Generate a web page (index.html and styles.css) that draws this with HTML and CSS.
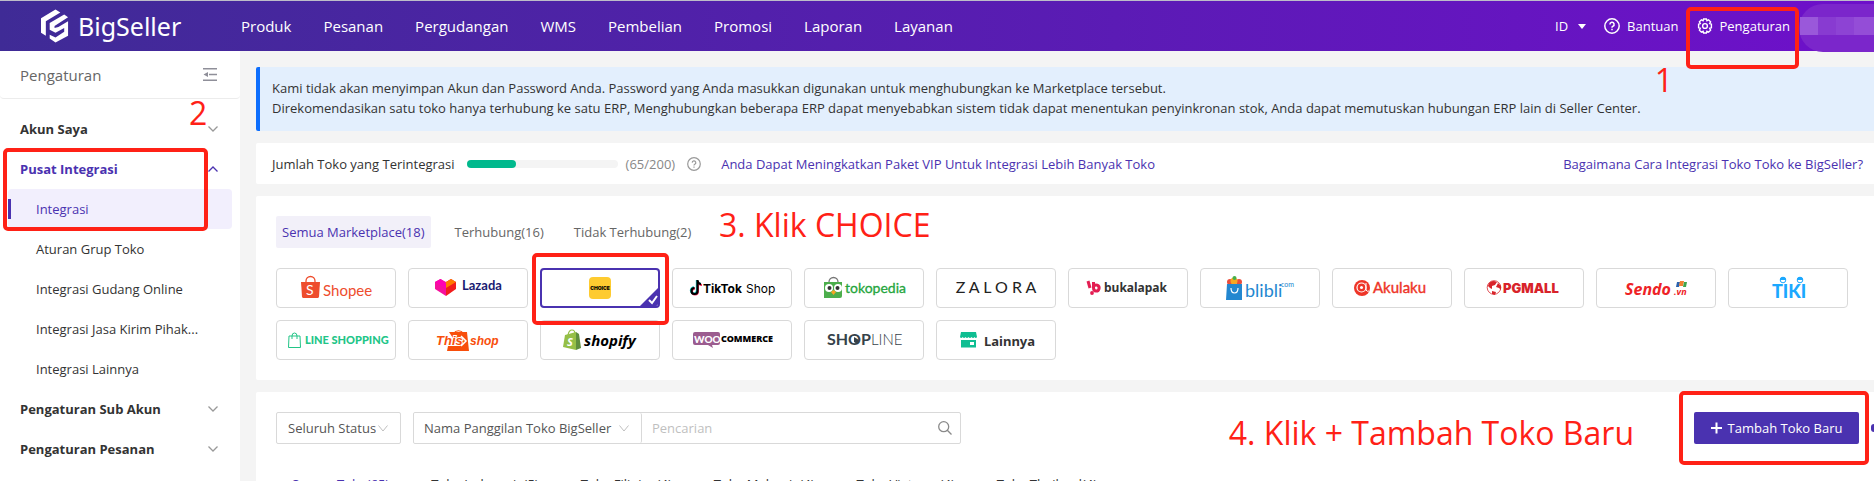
FILE: index.html
```html
<!DOCTYPE html>
<html lang="id">
<head>
    <meta charset="UTF-8">
    <meta name="viewport" content="width=device-width, initial-scale=1.0">
    <title>BigSeller - Integrasi</title>
    <link rel="stylesheet" href="styles.css">
</head>
<body>
    <header class="header">
        <a class="brand" href="#" aria-label="BigSeller">
            <svg class="brand-icon" viewBox="0 0 30 34" fill="#fff">
                <path d="M0 9 15 0l5 3L5 12v15L0 24z"/>
                <path d="M9 14 24 5l4 3-14 9v2l4-1 10-6v15L15 34 9 30v-4l6 3 9-6v-4l-9 5-6-3z"/>
            </svg>
            <span class="brand-name">BigSeller</span>
        </a>
        <nav class="nav">
            <a href="#">Produk</a>
            <a href="#">Pesanan</a>
            <a href="#">Pergudangan</a>
            <a href="#">WMS</a>
            <a href="#">Pembelian</a>
            <a href="#">Promosi</a>
            <a href="#">Laporan</a>
            <a href="#">Layanan</a>
        </nav>
        <div class="header-tools">
            <button class="tool" type="button">ID <span class="caret"></span></button>
            <a class="tool" href="#">
                <svg width="16" height="16" viewBox="0 0 16 16" fill="none" stroke="#fff" stroke-width="1.5"><circle cx="8" cy="8" r="7.2"/><path d="M5.9 6.4a2.1 2.1 0 1 1 3 1.9c-.7.3-.9.6-.9 1.4M8 10.8v1.4"/></svg>
                Bantuan
            </a>
            <a class="tool" href="#">
                <svg width="16" height="16" viewBox="0 0 16 16" fill="none" stroke="#fff" stroke-width="1.4"><path d="M6.6 1h2.8l.5 1.7 1.7-.9 2 2-.9 1.7 1.7.5v3.8l-1.7.5.9 1.9-2 2-1.7-.9-.5 1.7H6.6l-.5-1.7-1.7.9-2-2 .9-1.9-1.7-.5V6l1.7-.5-.9-1.7 2-2 1.7.9z"/><circle cx="8" cy="8" r="2.4"/></svg>
                Pengaturan
            </a>
        </div>
        <div class="account">
            <div class="account-name"><i></i><i></i><i></i><i></i></div>
        </div>
    </header>

    <div class="page">
        <aside class="sidebar">
            <div class="sidebar-head">
                <span>Pengaturan</span>
                <button class="collapse" type="button" aria-label="Tutup menu">
                    <svg width="14" height="13" viewBox="0 0 14 13" fill="#8f8f99"><path d="M0 0h14v1.6H0zM6 5.7h8v1.6H6zM0 11.4h14V13H0zM.5 6.5 5 4v5z"/></svg>
                </button>
            </div>
            <ul class="menu">
                <li><a class="group" href="#">Akun Saya <svg class="arrow" viewBox="0 0 10 6"><path d="M.5.5 5 5 9.5.5"/></svg></a></li>
                <li>
                    <a class="group open" href="#">Pusat Integrasi <svg class="arrow" viewBox="0 0 10 6"><path d="M.5 5.5 5 1l4.5 4.5"/></svg></a>
                    <ul class="submenu">
                        <li><a class="active" href="#">Integrasi</a></li>
                        <li><a href="#">Aturan Grup Toko</a></li>
                        <li><a href="#">Integrasi Gudang Online</a></li>
                        <li><a href="#">Integrasi Jasa Kirim Pihak...</a></li>
                        <li><a href="#">Integrasi Lainnya</a></li>
                    </ul>
                </li>
                <li><a class="group" href="#">Pengaturan Sub Akun <svg class="arrow" viewBox="0 0 10 6"><path d="M.5.5 5 5 9.5.5"/></svg></a></li>
                <li><a class="group" href="#">Pengaturan Pesanan <svg class="arrow" viewBox="0 0 10 6"><path d="M.5.5 5 5 9.5.5"/></svg></a></li>
            </ul>
        </aside>

        <main class="content">
            <div class="notice">
                <p>Kami tidak akan menyimpan Akun dan Password Anda. Password yang Anda masukkan digunakan untuk menghubungkan ke Marketplace tersebut.</p>
                <p>Direkomendasikan satu toko hanya terhubung ke satu ERP, Menghubungkan beberapa ERP dapat menyebabkan sistem tidak dapat menentukan penyinkronan stok, Anda dapat memutuskan hubungan ERP lain di Seller Center.</p>
            </div>

            <section class="panel quota">
                <span>Jumlah Toko yang Terintegrasi</span>
                <div class="progress"><div class="progress-bar" style="width: 32.5%"></div></div>
                <span class="count">(65/200)</span>
                <svg class="help" width="14" height="14" viewBox="0 0 14 14" fill="none" stroke="#999" stroke-width="1.2"><circle cx="7" cy="7" r="6.3"/><path d="M5.2 5.6a1.8 1.8 0 1 1 2.6 1.7c-.6.3-.8.5-.8 1.2M7 9.5v1.2"/></svg>
                <a class="upgrade" href="#">Anda Dapat Meningkatkan Paket VIP Untuk Integrasi Lebih Banyak Toko</a>
                <a class="howto" href="#">Bagaimana Cara Integrasi Toko Toko ke BigSeller?</a>
            </section>

            <section class="panel marketplaces">
                <div class="tabs">
                    <button class="tab active" type="button">Semua Marketplace(18)</button>
                    <button class="tab" type="button">Terhubung(16)</button>
                    <button class="tab" type="button">Tidak Terhubung(2)</button>
                </div>
                <div class="cards">
                    <button class="card" type="button" aria-label="Shopee">
                        <svg viewBox="0 0 120 40"><path d="M30 14v-1a4.500 4.500 0 0 1 9 0v1" fill="none" stroke="#ee4d2d" stroke-width="1.300"/><path d="M25 14h19l-1 14.500q-.2 1.500-1.500 1.500h-14q-1.300 0-1.500-1.500z" fill="#ee4d2d"/><text x="30" y="27" class="lato" font-size="14" fill="#fff">S</text><text x="47" y="28" class="lato" font-size="15" fill="#ee4d2d">Shopee</text></svg>
                    </button>
                    <button class="card" type="button" aria-label="Lazada">
                        <svg viewBox="0 0 120 40"><path d="m27 14 5.500-3 5.500 3v14l-11-7z" fill="#f5109c"/><path d="m38 14 5-3 5 3v7l-10 7z" fill="#f21c1c"/><path d="m32.500 17 5.500-3 5-3 5 3-10 6z" fill="#ff7a00"/><path d="m27 14 5.500-3 5.500 4v6z" fill="#ff00b4"/><text x="54" y="22" class="lato bold" font-size="13" fill="#1a1b72">Lazada</text></svg>
                    </button>
                    <button class="card selected" type="button" aria-label="Choice">
                        <svg viewBox="0 0 120 40"><rect x="49" y="9" width="22" height="22" rx="4" fill="#fecb30"/><text x="60" y="22" class="inter heavy" font-size="5" text-anchor="middle">CHOICE</text><path d="M120 18v22H98z" fill="#4a32b0"/><path d="m109 32 3 3 5-7" fill="none" stroke="#fff" stroke-width="2"/></svg>
                    </button>
                    <button class="card" type="button" aria-label="TikTok Shop">
                        <svg viewBox="0 0 120 40"><path d="M25 12v10.500a3 3 0 1 1-3-3M25 13q1 3 4 3" fill="none" stroke="#25d3cf" stroke-width="2.400"/><path d="M26 13v10.500a3 3 0 1 1-3-3M26 14q1 3 4 3" fill="none" stroke="#f5285a" stroke-width="2"/><path d="M25.500 12v11a3 3 0 1 1-3-3M25.500 13q1 3 3.500 3" fill="none" stroke="#000" stroke-width="2.200"/><text x="31" y="25" class="inter bold" font-size="12">TikTok</text><text x="74" y="25" class="inter" font-size="12">Shop</text></svg>
                    </button>
                    <button class="card" type="button" aria-label="Tokopedia">
                        <svg viewBox="0 0 120 40"><path d="M25 14a4.500 4.500 0 0 1 9 0" fill="none" stroke="#777" stroke-width="1.300"/><path d="M20 14h18v14q0 2-2 2H20z" fill="#4cae4c"/><circle cx="25" cy="20" r="4" fill="#fff"/><circle cx="34" cy="20" r="4" fill="#fff"/><circle cx="25.500" cy="20" r="2" fill="#333"/><circle cx="33.500" cy="20" r="2" fill="#333"/><path d="m27 24 2.500-2 2.500 2-2.500 3z" fill="#f5a623"/><text x="41" y="25" class="lato" font-size="14" fill="#25a53c" stroke="#25a53c" stroke-width=".3">tokopedia</text></svg>
                    </button>
                    <button class="card" type="button" aria-label="Zalora">
                        <svg viewBox="0 0 120 40"><text x="60" y="25" class="lato" font-size="16" fill="#222" text-anchor="middle">Z A L O R A</text></svg>
                    </button>
                    <button class="card" type="button" aria-label="Bukalapak">
                        <svg viewBox="0 0 120 40"><g fill="none" stroke="#e31e52" stroke-width="3"><path d="m20 13 2 7"/><path d="M25.500 14v5.500q0 3.500 2.500 3.500a3 3 0 1 0-2.500-4.500"/></g><circle cx="24" cy="25" r="1.900" fill="#e31e52"/><text x="36" y="24" class="noto bold" font-size="12" fill="#333">bukalapak</text></svg>
                    </button>
                    <button class="card" type="button" aria-label="Blibli">
                        <svg viewBox="0 0 120 40"><g fill="#e94e3c"><circle cx="30" cy="14" r="3"/><circle cx="39" cy="14" r="3"/></g><circle cx="34" cy="13" r="3.500" fill="#f7a823"/><circle cx="34.500" cy="10" r="2" fill="#45b04a"/><path d="M27 16h15v16H26z" fill="#2387d0"/><path d="M31 20q0 5 3.500 5t3.500-5" fill="none" stroke="#fff" stroke-width="1.200"/><text x="45" y="29" class="lato" font-size="18" fill="#2387d0">blibli</text><text x="81" y="19" class="lato" font-size="7" fill="#2387d0">com</text></svg>
                    </button>
                    <button class="card" type="button" aria-label="Akulaku">
                        <svg viewBox="0 0 120 40"><circle cx="30" cy="20" r="8" fill="#ee3528"/><circle cx="29.500" cy="19.500" r="4.500" fill="none" stroke="#fff" stroke-width="1.200"/><circle cx="29.500" cy="19.500" r="1.500" fill="#fff"/><path d="M34 15v7q1 2 3 1" fill="none" stroke="#fff"/><text x="41" y="25" class="lato" font-size="15" fill="#ee3528" stroke="#ee3528" stroke-width=".4">Akulaku</text></svg>
                    </button>
                    <button class="card" type="button" aria-label="PGMall">
                        <svg viewBox="0 0 120 40"><circle cx="30" cy="19.500" r="6.800" fill="#fff" stroke="#d8232a" stroke-width=".8"/><path d="M24 18q1-5 6-5l3 1-2 3-3 1v3l-2-1zM34 15l3 3v4l-2-2-3-1zM28 23l4 1-1 3-3-1z" fill="#d8232a"/><text x="39" y="25" class="inter heavy" font-size="13" fill="#d8232a">PGMALL</text></svg>
                    </button>
                    <button class="card" type="button" aria-label="Sendo">
                        <svg viewBox="0 0 120 40"><text x="29" y="27" class="noto bold italic" font-size="16" fill="#ee2226">Sendo</text><text x="78" y="27" class="noto bold italic" font-size="9" fill="#ee2226">.vn</text><path d="M81 14h3l-1 5h-3z" fill="#2b62ae"/><path d="M84 13h4l-1 5h-4z" fill="#f08030"/><path d="M88 14h3l-1 5h-3z" fill="#3fa64b"/></svg>
                    </button>
                    <button class="card" type="button" aria-label="Tiki">
                        <svg viewBox="0 0 120 40"><g fill="none" stroke="#1ba8ff" stroke-width="1"><circle cx="55" cy="12" r="2.800"/><circle cx="72" cy="12" r="2.800"/></g><path d="M52 12a3 3 0 0 1 6 0zM69 12a3 3 0 0 1 6 0z" fill="#1ba8ff"/><text x="44" y="30" class="lato heavy" font-size="18" fill="#1ba8ff">TIKI</text></svg>
                    </button>
                    <button class="card" type="button" aria-label="Line Shopping">
                        <svg viewBox="0 0 120 40"><path d="M13 16h11l.5 11.500h-12zM16 19v-3a2.500 3 0 0 1 5 0v3" fill="none" stroke="#22c587"/><text x="29" y="24" class="lato heavy" font-size="11" fill="#22c587">LINE SHOPPING</text></svg>
                    </button>
                    <button class="card" type="button" aria-label="Thisshop">
                        <svg viewBox="0 0 120 40"><path d="M46 13a5 4 0 0 1 9 0" fill="none" stroke="#f84e0b" stroke-width="1.200"/><path d="M41 12h18l2 19H39l1-5h10z" fill="#f84e0b"/><text x="28" y="25" class="sans bold italic" font-size="13" fill="#f84e0b" stroke="#fff" stroke-width="2" paint-order="stroke">This</text><path d="m53 16 5 5-5 5" fill="none" stroke="#fff" stroke-width="1.500"/><text x="62" y="25" class="sans bold italic" font-size="12" fill="#f84e0b">shop</text></svg>
                    </button>
                    <button class="card" type="button" aria-label="Shopify">
                        <svg viewBox="0 0 120 40"><path d="M28 15q1-5 4-5t3 4" fill="none" stroke="#95bf47" stroke-width="1.200"/><path d="m25 15 11-3v18l-13-3z" fill="#95bf47"/><path d="m36 12 3 2 2 14-5 2z" fill="#5e8e3e"/><text x="27" y="26" class="noto bold italic" font-size="11" fill="#fff">S</text><text x="44" y="26" class="noto bold italic" font-size="15">shopify</text></svg>
                    </button>
                    <button class="card" type="button" aria-label="WooCommerce">
                        <svg viewBox="0 0 120 40"><path d="M23 12h23q2 0 2 2v9q0 2-2 2h-6l1 3-5-3H23q-2 0-2-2v-9q0-2 2-2z" fill="#9b5c8f"/><text x="22" y="23" class="lato heavy" font-size="10" fill="#fff">WOO</text><text x="49" y="22" class="noto heavy" font-size="9">COMMERCE</text></svg>
                    </button>
                    <button class="card" type="button" aria-label="Shopline">
                        <svg viewBox="0 0 120 40"><text x="23" y="25" class="lato bold" font-size="16" fill="#36424a">SHOP</text><path d="m50 17 5 3-2 4-3-2z" fill="#36424a"/><text x="67" y="25" class="lato light" font-size="15" fill="#36424a">LINE</text></svg>
                    </button>
                    <button class="card" type="button" aria-label="Lainnya">
                        <svg viewBox="0 0 120 40"><path d="M25 12h15l1 5q-1 2-2.500 0-1.300 2-3 0-1.500 2-3 0-1.500 2-3 0-1.500 2-2.800 0-1.700 2-2.700 0z" fill="#0fbe92"/><path d="M25 20h15v7.500H25zM34 22v3h4v-3z" fill="#0fbe92" fill-rule="evenodd"/><text x="48" y="26" class="noto bold" font-size="13" fill="#333">Lainnya</text></svg>
                    </button>
                </div>
            </section>

            <section class="panel shops">
                <div class="filters">
                    <select class="select status" aria-label="Status"><option>Seluruh Status</option></select>
                    <div class="search">
                        <select class="select field" aria-label="Cari berdasarkan"><option>Nama Panggilan Toko BigSeller</option></select>
                        <input type="text" placeholder="Pencarian" aria-label="Pencarian">
                        <button class="search-btn" type="button" aria-label="Cari"><svg width="14" height="14" viewBox="0 0 14 14" fill="none" stroke="#8a8a8a" stroke-width="1.300"><circle cx="5.700" cy="5.700" r="5"/><path d="m9.300 9.300 4.200 4.200"/></svg></button>
                    </div>
                    <button class="add" type="button"><svg width="11" height="12" viewBox="0 0 11 12" stroke="#fff" stroke-width="2"><path d="M5.500.5v11M0 6h11"/></svg>Tambah Toko Baru</button>
                    <span class="more"></span>
                </div>
                <div class="shop-tabs">
                    <a class="active" href="#">Semua Toko(65)</a>
                    <a href="#">Toko Indonesia(5)</a>
                    <a href="#">Toko Filipina(4)</a>
                    <a href="#">Toko Malaysia(4)</a>
                    <a href="#">Toko Vietnam(4)</a>
                    <a href="#">Toko Thailand(4)</a>
                </div>
            </section>
        </main>
    </div>

    <!-- tutorial steps drawn over the page -->
    <div class="mark mark-1"></div>
    <div class="mark mark-2"></div>
    <div class="mark mark-3"></div>
    <div class="mark mark-4"></div>
    <span class="step step-1">1</span>
    <span class="step step-2">2</span>
    <span class="step step-3">3. Klik CHOICE</span>
    <span class="step step-4">4. Klik + Tambah Toko Baru</span>
</body>
</html>
```
FILE: styles.css
```css
* {
    box-sizing: border-box;
}
body {
    position: relative;
    height: 100vh;
    margin: 0;
    overflow: hidden;
    background: #f4f4f4;
    color: #333;
    font-family: "Open Sans", "Noto Sans", sans-serif;
    font-size: 13px;
    line-height: 20px;
}
a {
    color: inherit;
    text-decoration: none;
}
button, input, select {
    font: inherit;
    color: inherit;
}
button {
    padding: 0;
    border: none;
    background: none;
    cursor: pointer;
}
p, ul {
    margin: 0;
    padding: 0;
    list-style: none;
}

/* header */
.header {
    display: flex;
    align-items: center;
    height: 51px;
    border-top: 1px solid #bdbdc9;
    background: linear-gradient(90deg, #3f2b96, #6e10ca);
    color: #fff;
}
.brand {
    display: flex;
    align-items: center;
    gap: 8px;
    width: 241px;
    padding-left: 41px;
}
.brand-icon {
    width: 29px;
    height: 34px;
}
.brand-name {
    font-family: "Noto Sans", sans-serif;
    font-size: 25px;
    line-height: 32px;
}
.nav {
    display: flex;
    flex: 1;
    gap: 32px;
    font-size: 15px;
}
.header-tools {
    display: flex;
    gap: 18px;
    margin-right: 9px;
}
.tool {
    display: flex;
    align-items: center;
    gap: 7px;
}
.caret {
    margin-left: 3px;
    border: 4px solid transparent;
    border-top: 5px solid #fff;
    border-bottom: none;
}
.account {
    align-self: flex-start;
    width: 75px;
    height: 48px;
    margin-top: 3px;
    padding: 13px 0 0 1px;
    border-radius: 24px 0 0 24px;
    background: #7b26cb;
}
.account-name {
    display: flex;
    height: 18px;
}
.account-name i {
    width: 18px;
    background: #9a58da;
}
.account-name i:nth-child(2) {
    background: #883bd1;
}
.account-name i:nth-child(3) {
    background: #8d43d4;
}
.account-name i:nth-child(4) {
    flex: 1;
    background: #944dd7;
}

/* sidebar */
.page {
    display: flex;
    height: calc(100vh - 51px);
}
.sidebar {
    flex: none;
    width: 240px;
    background: #fff;
}
.sidebar-head {
    display: flex;
    align-items: center;
    justify-content: space-between;
    height: 48px;
    padding: 0 23px 0 20px;
    border-bottom: 1px solid #ececec;
    border-radius: 4px;
    color: #666;
    font-size: 15px;
}
.collapse {
    display: flex;
}
.menu {
    padding: 10px 8px 0;
}
.group {
    display: flex;
    align-items: center;
    justify-content: space-between;
    height: 40px;
    padding: 0 14px 0 12px;
    font-weight: bold;
}
.group.open {
    color: #4a32b0;
}
.arrow {
    width: 10px;
    height: 6px;
    fill: none;
    stroke: #999;
    stroke-width: 1.3;
}
.open .arrow {
    stroke: #4a32b0;
}
.submenu a {
    display: block;
    padding: 10px 0 10px 28px;
    border-radius: 4px;
    white-space: nowrap;
}
.submenu .active {
    background: linear-gradient(#4a32b0, #4a32b0) 0 50% / 3px 20px no-repeat #f2effd;
    color: #4a32b0;
}

/* content */
.content {
    display: flex;
    flex: 1;
    flex-direction: column;
    gap: 12px;
    min-width: 0;
    padding: 16px 0 0 16px;
}
.notice {
    flex: none;
    padding: 11px 12px 13px;
    border-left: 4px solid #0d6efd;
    border-radius: 2px 0 0 2px;
    background: #e3effd;
    white-space: nowrap;
}
.panel {
    flex: none;
    border-radius: 2px 0 0 2px;
    background: #fff;
}
.quota {
    display: flex;
    align-items: center;
    height: 41px;
    padding: 0 11px 0 16px;
}
.progress {
    width: 151px;
    height: 8px;
    margin: 0 8px 0 12px;
    border-radius: 4px;
    background: #f4f4f4;
}
.progress-bar {
    height: 8px;
    border-radius: 4px;
    background: #00b98d;
}
.count {
    color: #888;
}
.help {
    margin: 0 20px 0 12px;
}
.upgrade, .howto {
    color: #4a32b0;
}
.howto {
    margin-left: auto;
}
.marketplaces {
    padding: 20px;
}
.tabs {
    display: flex;
    gap: 18px;
    margin-bottom: 20px;
}
.tab {
    height: 32px;
    padding: 0 6px;
    border-radius: 2px;
    color: #666;
}
.tab.active {
    background: #f2f0f9;
    color: #4a32b0;
}
.cards {
    display: flex;
    flex-wrap: wrap;
    gap: 12px;
}
.card {
    width: 120px;
    height: 40px;
    border: 1px solid #d9d9d9;
    border-radius: 4px;
    background: #fff;
    overflow: hidden;
}
.card svg {
    display: block;
    width: 120px;
    height: 40px;
    margin: -1px;
}
.card.selected {
    border: 2px solid #4a32b0;
}
.card.selected svg {
    margin: -2px;
}
.lato {
    font-family: Lato, sans-serif;
}
.inter {
    font-family: Inter, sans-serif;
}
.noto {
    font-family: "Noto Sans", sans-serif;
}
.sans {
    font-family: "Liberation Sans", sans-serif;
}
.light {
    font-weight: 300;
}
.bold {
    font-weight: 700;
}
.heavy {
    font-weight: 900;
}
.italic {
    font-style: italic;
}

/* shop list */
.shops {
    flex: 1 0 auto;
    padding: 20px 0 0 20px;
}
.filters {
    display: flex;
    gap: 12px;
}
.select {
    height: 32px;
    padding: 0 24px 0 11px;
    border: 1px solid #d9d9d9;
    border-radius: 2px;
    appearance: none;
    background: url("data:image/svg+xml,%3Csvg xmlns='http://www.w3.org/2000/svg' width='10' height='7'%3E%3Cpath d='M.5.5 5 6 9.500.5' fill='none' stroke='%23bfbfbf'/%3E%3C/svg%3E") right 12px center no-repeat #fff;
    color: #555;
}
.status {
    width: 125px;
}
.search {
    display: flex;
    width: 548px;
    height: 32px;
    border: 1px solid #d9d9d9;
    border-radius: 2px;
}
.field {
    width: 228px;
    height: 30px;
    padding-left: 10px;
    border-width: 0 1px 0 0;
}
.search input {
    flex: 1;
    min-width: 0;
    padding: 0 10px;
    border: none;
    outline: none;
}
.search input::placeholder {
    color: #bfbfbf;
}
.search-btn {
    display: flex;
    align-items: center;
    padding-right: 8px;
}
.add {
    display: flex;
    align-items: center;
    justify-content: center;
    gap: 6px;
    width: 165px;
    height: 32px;
    margin-left: auto;
    border-radius: 2px;
    background: #4a32b0;
    color: #fff;
}
.more {
    align-self: center;
    width: 3px;
    height: 8px;
    border-radius: 4px 0 0 4px;
    background: #4a32b0;
}
.shop-tabs {
    display: flex;
    gap: 42px;
    padding: 30px 16px 0;
    white-space: nowrap;
}
.shop-tabs .active {
    color: #4a32b0;
}

/* tutorial marks */
.mark {
    position: absolute;
    border: 4px solid #ff2116;
    border-radius: 5px;
}
.mark-1 {
    top: 7px;
    right: 75px;
    width: 113px;
    height: 62px;
}
.mark-2 {
    top: 148px;
    left: 3px;
    width: 205px;
    height: 83px;
}
.mark-3 {
    top: 253px;
    left: 532px;
    width: 137px;
    height: 72px;
}
.mark-4 {
    top: 391px;
    right: 5px;
    width: 190px;
    height: 74px;
}
.step {
    position: absolute;
    color: #ff2116;
    font-size: 32px;
    line-height: 40px;
    white-space: nowrap;
}
.step-1 {
    top: 60px;
    right: 201px;
}
.step-2 {
    top: 93px;
    left: 189px;
}
.step-3 {
    top: 205px;
    left: 719px;
}
.step-4 {
    top: 413px;
    right: 240px;
}
```
